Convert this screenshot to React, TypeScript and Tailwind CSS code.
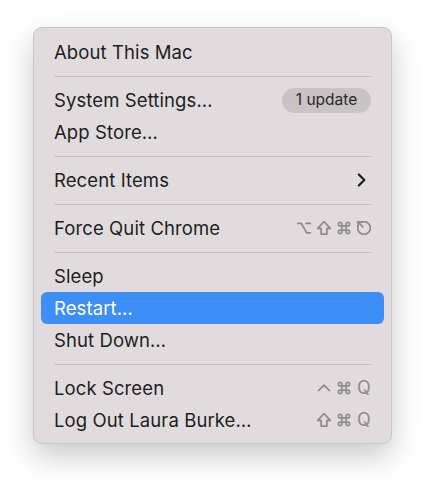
type Key = "opt" | "shift" | "cmd" | "esc" | "ctrl" | "Q";

type Item = {
  label: string;
  keys?: Key[];
  badge?: string;
  submenu?: boolean;
  active?: boolean;
};

const GROUPS: Item[][] = [
  [{ label: "About This Mac" }],
  [{ label: "System Settings…", badge: "1 update" }, { label: "App Store…" }],
  [{ label: "Recent Items", submenu: true }],
  [{ label: "Force Quit Chrome", keys: ["opt", "shift", "cmd", "esc"] }],
  [{ label: "Sleep" }, { label: "Restart…", active: true }, { label: "Shut Down…" }],
  [
    { label: "Lock Screen", keys: ["ctrl", "cmd", "Q"] },
    { label: "Log Out Laura Burke…", keys: ["shift", "cmd", "Q"] },
  ],
];

function KeyGlyph({ k }: { k: Key }) {
  if (k === "Q") {
    return <span className="w-[14px] text-center text-[18px] leading-none">Q</span>;
  }
  return (
    <svg viewBox="1 1 12 12" className="h-[14px] w-[14px]" fill="none" stroke="currentColor" strokeWidth={1.45} strokeLinecap="round" strokeLinejoin="round">
      {k === "opt" && (
        <>
          <path d="M1.3 3h3.4l4.6 8.2h3.4" />
          <path d="M8.8 3h3.9" />
        </>
      )}
      {k === "shift" && <path d="M7 1.6L1.5 7.3h3v4.9h5V7.3h3z" />}
      {k === "cmd" && (
        <>
          <path d="M5.2 5.2h3.6v3.6H5.2z" />
          <path d="M5.2 5.2V3.7A1.5 1.5 0 1 0 3.7 5.2h1.5" />
          <path d="M8.8 5.2V3.7a1.5 1.5 0 1 1 1.5 1.5H8.8" />
          <path d="M5.2 8.8v1.5a1.5 1.5 0 1 1-1.5-1.5h1.5" />
          <path d="M8.8 8.8v1.5a1.5 1.5 0 1 0 1.5-1.5H8.8" />
        </>
      )}
      {k === "esc" && (
        <>
          <path d="M5 2A5.4 5.4 0 1 1 2 5" />
          <path d="M1.8 1.8l4.2 4.2" />
          <path d="M1.8 5.2V1.8h3.4" />
        </>
      )}
      {k === "ctrl" && <path d="M2.3 9.3L7 4.6l4.7 4.7" />}
    </svg>
  );
}

function Row({ item }: { item: Item }) {
  return (
    <div
      className={
        "flex h-[32px] items-center justify-between rounded-[6px] px-[13px] " +
        (item.active ? "bg-[#3d8ef7] text-white" : "text-[#1e1d1f]")
      }
    >
      <span className="text-[18.5px] leading-none tracking-[0.1px]">{item.label}</span>
      {item.badge && (
        <span className="flex h-[25px] w-[89px] items-center justify-center rounded-full bg-[#c9c3c6] text-[15.5px] text-[#2a2829]">
          {item.badge}
        </span>
      )}
      {item.submenu && (
        <svg viewBox="0 0 9 14" className="mr-[5px] h-[14px] w-[9px]" fill="none" stroke="currentColor" strokeWidth={2.2} strokeLinecap="round" strokeLinejoin="round">
          <path d="M1.8 1.5L7.3 7l-5.5 5.5" />
        </svg>
      )}
      {item.keys && (
        <span className="flex items-center gap-[6px] text-[#8f8a8d]">
          {item.keys.map((k, i) => (
            <KeyGlyph key={i} k={k} />
          ))}
        </span>
      )}
    </div>
  );
}

export default function App() {
  return (
    <div className="min-h-[483px] w-[426px] bg-white pl-[33px] pt-[27px]" style={{ fontFamily: "Inter, 'Noto Sans', sans-serif" }}>
      <div className="w-[359px] rounded-[9px] border border-[#c9c4c7] bg-[#e1dbde] px-[7px] pb-[7px] pt-[8px] shadow-[0_12px_30px_rgba(0,0,0,0.22)]">
        {GROUPS.map((group, gi) => (
          <div key={gi}>
            {gi > 0 && <div className="mx-[13px] mb-[7px] mt-[8px] h-px bg-[#c7c1c4]" />}
            {group.map((item) => (
              <Row key={item.label} item={item} />
            ))}
          </div>
        ))}
      </div>
    </div>
  );
}
